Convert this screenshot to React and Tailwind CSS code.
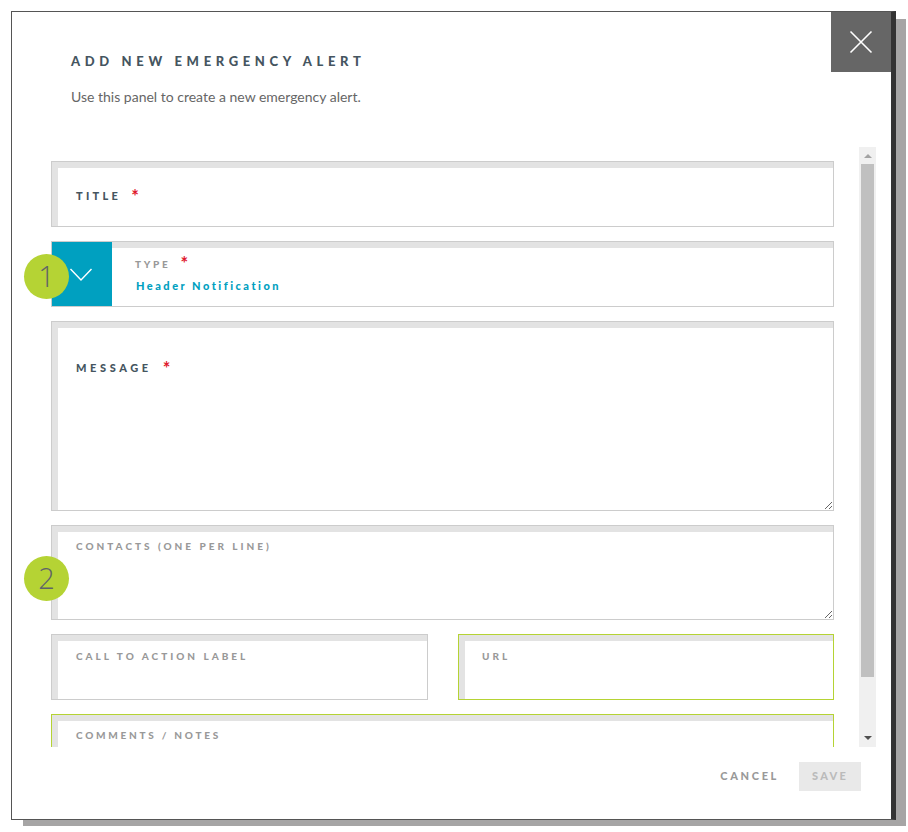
import React from "react";

const font = "font-['Lato','Open_Sans',sans-serif]";

function Star({ className }) {
  return <span className={`text-[#e0182d] font-bold text-[18px] leading-none ${className}`}>*</span>;
}

function Label({ top, left = "left-[25px]", tracking = "tracking-[3px]", children }) {
  return (
    <span className={`absolute ${top} ${left} ${tracking} text-[#999] text-[10px] leading-[12px] font-black whitespace-nowrap pointer-events-none`}>
      {children}
    </span>
  );
}

function Field({ label, area, green, className }) {
  const border = green ? "border-[#b5d334]" : "border-[#cccccc]";
  const base = `block w-full h-full border ${border} bg-white shadow-[inset_6px_6px_0_#e3e3e3] outline-none`;
  return (
    <div className={`relative ${className}`}>
      {area ? <textarea className={`${base} resize`} /> : <input className={base} />}
      {label}
    </div>
  );
}

function Bubble({ n, className }) {
  return (
    <div className={`absolute left-[12px] w-[45px] h-[45px] pb-[2px] rounded-full bg-[#b5d334] flex items-center justify-center text-[#5f6468] font-['Open_Sans',sans-serif] text-[29px] font-light leading-none ${className}`}>
      {n}
    </div>
  );
}

export default function App() {
  return (
    <div className={`w-[908px] h-[832px] bg-white pl-[11px] pt-[11px] antialiased ${font}`}>
      <div className="relative w-[885px] h-[809px] bg-white border-t border-l border-b border-r-[5px] border-t-[#555] border-l-[#555] border-b-[#555] border-r-[#333] shadow-[11px_7px_0_-1px_#a6a5a5]">
        <button className="absolute top-0 right-0 w-[60px] h-[60px] bg-[#666] flex items-center justify-center">
          <svg width="24" height="24" viewBox="0 0 24 24" fill="none" stroke="#fff" strokeWidth="1.6">
            <path d="M1.5 1.5 L22.5 22.5 M22.5 1.5 L1.5 22.5" />
          </svg>
        </button>

        <div className="pl-[59px] pt-[41px] h-[135px]">
          <h1 className="text-[#455560] text-[13px] leading-[16px] font-black tracking-[4.65px]">ADD NEW EMERGENCY ALERT</h1>
          <p className="mt-[19px] text-[#666] text-[14px] leading-[18px]">Use this panel to create a new emergency alert.</p>
        </div>

        <div className="flex pl-[39px] gap-[25px]">
          <div className="w-[783px] h-[600px] overflow-hidden pt-[14px] flex flex-col gap-[14px] shrink-0">
            <Field
              className="h-[66px] shrink-0"
              label={
                <span className="absolute left-[25px] top-[28px] flex gap-[10px] text-[#455560] text-[11px] leading-[14px] font-black tracking-[3.3px]">
                  TITLE <Star className="-mt-[2px]" />
                </span>
              }
            />

            <div className="relative h-[66px] shrink-0 flex border border-[#ccc] bg-white shadow-[inset_0_6px_0_#e3e3e3]">
              <div className="w-[60px] pt-[2px] pr-[2px] bg-[#00a0c0] flex items-center justify-center">
                <svg width="24" height="14" viewBox="0 0 24 14" fill="none" stroke="#fff" strokeWidth="1.4">
                  <path d="M1.5 1 L12 12 L22.5 1" />
                </svg>
              </div>
              <div className="pl-[23px] pt-[16px]">
                <div className="flex gap-[10px] text-[#999] text-[10px] leading-[12px] font-black tracking-[2.7px]">
                  TYPE <Star className="-mt-[4px]" />
                </div>
                <div className="mt-[7px] pl-[1px] text-[#00a0c0] text-[11px] leading-[14px] font-black tracking-[2.5px]">Header Notification</div>
              </div>
            </div>

            <Field
              area
              className="h-[190px] shrink-0"
              label={
                <span className="absolute left-[25px] top-[40px] flex gap-[11px] text-[#455560] text-[11px] leading-[14px] font-black tracking-[3.6px]">
                  MESSAGE <Star className="-mt-[2px]" />
                </span>
              }
            />

            <Field area className="h-[95px] shrink-0" label={<Label top="top-[15px]">CONTACTS (ONE PER LINE)</Label>} />

            <div className="flex gap-[30px] h-[66px] shrink-0">
              <Field className="w-[377px] shrink-0" label={<Label top="top-[16px]">CALL TO ACTION LABEL</Label>} />
              <Field green className="w-[376px] shrink-0" label={<Label top="top-[16px]" left="left-[24px]">URL</Label>} />
            </div>

            <Field green className="h-[66px] shrink-0" label={<Label top="top-[15px]" tracking="tracking-[2.75px]">COMMENTS / NOTES</Label>} />
          </div>

          <div className="w-[17px] h-[600px] bg-[#f0f0f0] flex flex-col items-center shrink-0 px-[2px]">
            <div className="h-[17px] flex items-center justify-center">
              <div className="border-x-[4px] border-x-transparent border-b-[4px] border-b-[#a3a3a3]" />
            </div>
            <div className="w-full h-[513px] bg-[#c0c0c0]" />
            <div className="flex-1 w-full flex items-end justify-center pb-[7px]">
              <div className="border-x-[4px] border-x-transparent border-t-[4px] border-t-[#505050]" />
            </div>
          </div>
        </div>

        <div className="flex justify-end items-center gap-[20px] pr-[30px] mt-[15px]">
          <button className="text-[#999] text-[11px] font-black tracking-[2.65px]">CANCEL</button>
          <button className="w-[62px] h-[29px] bg-[#e9e9e9] text-[#bbb] text-[11px] font-black tracking-[2.2px]">SAVE</button>
        </div>

        <Bubble n="1" className="top-[242px]" />
        <Bubble n="2" className="top-[544px]" />
      </div>
    </div>
  );
}
